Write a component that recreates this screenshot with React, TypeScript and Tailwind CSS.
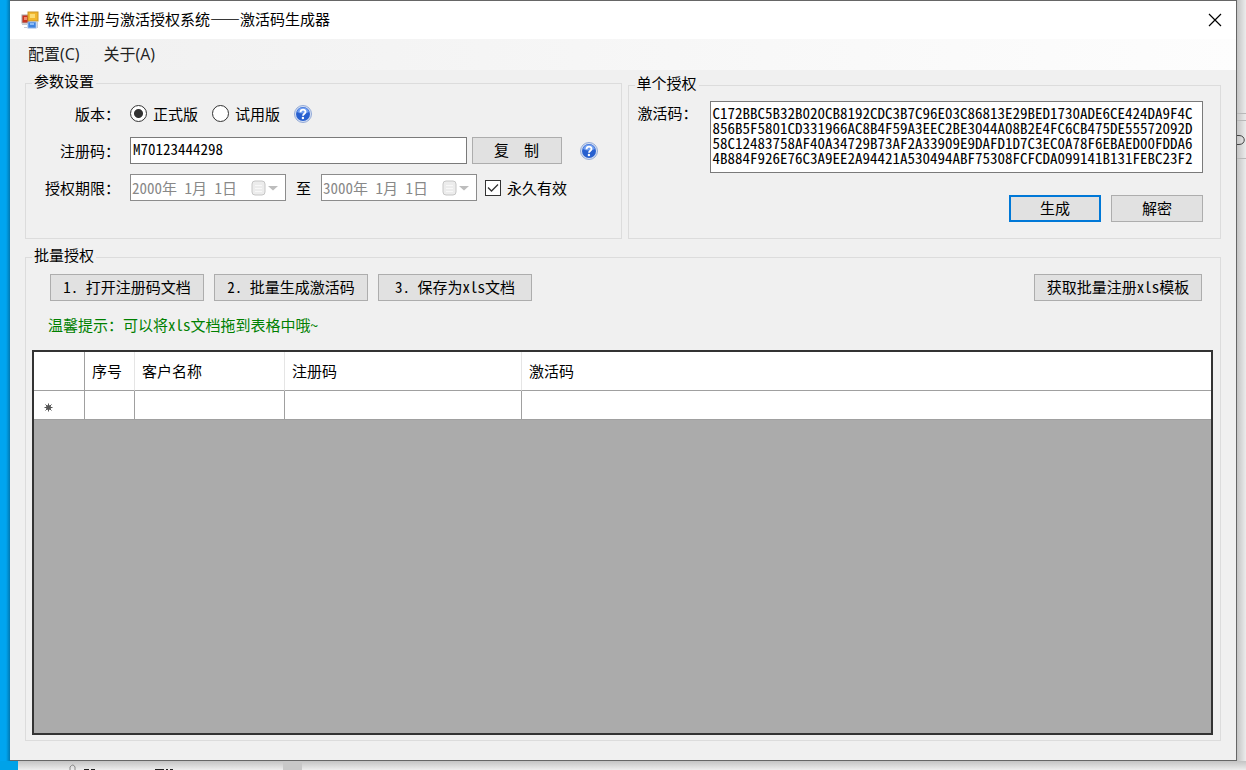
import type { ReactNode } from 'react';

const CODE = [
  'C172BBC5B32B020CB8192CDC3B7C96E03C86813E29BED1730ADE6CE424DA9F4C',
  '856B5F5801CD331966AC8B4F59A3EEC2BE3044A08B2E4FC6CB475DE55572092D',
  '58C12483758AF40A34729B73AF2A33909E9DAFD1D7C3EC0A78F6EBAED00FDDA6',
  '4B884F926E76C3A9EE2A94421A530494ABF75308FCFCDA099141B131FEBC23F2',
].join('\n');

function AppIcon() {
  return (
    <svg width="18" height="18" viewBox="0 0 18 18" aria-hidden="true">
      <rect x="1" y="4" width="7" height="8" fill="#c9321f" stroke="#a9a0a0" />
      <rect x="3" y="6" width="3" height="3" fill="#f08a6c" />
      <rect x="7" y="1" width="10" height="9" fill="#f2b72c" stroke="#c99526" />
      <rect x="9" y="3" width="5" height="4" fill="#fbdc72" />
      <rect x="7" y="11" width="8" height="6" fill="#3f84e0" stroke="#8fb2e4" />
      <rect x="9" y="12" width="4" height="2" fill="#8cbcf6" />
      <path d="M1 13.500h5M3 16.500h3M16.500 11v6" stroke="#c5c9d2" />
    </svg>
  );
}

function HelpIcon() {
  return (
    <svg className="shrink-0" width="18" height="18" viewBox="0 0 18 18" role="img" aria-label="帮助">
      <circle cx="9" cy="9" r="8.500" fill="#d5dff2" stroke="#94abd8" />
      <circle cx="9" cy="9" r="7" fill="#2860cf" />
      <path d="M3 7a6.300 6.300 0 0 1 12 0q-6 3-12 0z" fill="#6f9df0" />
      <path
        d="M6.500 7.200C6.600 3.800 11.700 4 11.500 7c-.1 1.700-2.400 1.900-2.500 3.800"
        fill="none"
        stroke="#fff"
        strokeWidth="1.800"
      />
      <circle cx="8.900" cy="13" r="1.200" fill="#fff" />
    </svg>
  );
}

function Group({ title, className, children }: { title: string; className: string; children: ReactNode }) {
  return (
    <fieldset className={`min-w-0 border border-[#dcdcdc] ${className}`}>
      <legend className="ml-1.5 px-0.5 pb-1 leading-4">{title}</legend>
      {children}
    </fieldset>
  );
}

function Button({ className, children }: { className: string; children: ReactNode }) {
  return (
    <button
      type="button"
      className={`h-[27px] shrink-0 whitespace-pre bg-[#e1e1e1] pb-0.5 text-center leading-4 hover:bg-[#e5f1fb] ${className}`}
    >
      {children}
    </button>
  );
}

function DateBox({ id, label, value }: { id: string; label: string; value: string }) {
  return (
    <div className="flex h-[27px] w-[156px] shrink-0 items-center border border-[#8c8c8c] bg-white pr-1.5">
      <input
        id={id}
        aria-label={label}
        className="h-full w-[120px] bg-transparent px-px leading-4 text-[#888]"
        defaultValue={value}
        disabled
      />
      <svg width="28" height="16" viewBox="0 0 28 16" aria-hidden="true">
        <rect x="1" y="1" width="13" height="14" rx="3" fill="#ececec" stroke="#c6c6c6" />
        <path d="M4 5.500h7M4 8.500h7M4 11.500h7" stroke="#f8f8f8" />
        <path d="M17 6h10l-5 4.500z" fill="#bdbdbd" />
      </svg>
    </div>
  );
}

const ROW = 'flex h-[27px] items-center';
const LABEL = 'mr-2.5 w-[94px] shrink-0 text-right';
const RADIO =
  'size-[17px] appearance-none rounded-full border border-[#333] bg-white checked:bg-[radial-gradient(circle,#333_0_4px,#fff_5px)]';
const GRAY_BORDER = 'border border-[#adadad]';

function Settings() {
  return (
    <Group title="参数设置" className="pb-[37px]">
      <div className="flex flex-col gap-2.5 pt-[7px]">
        <div className={ROW} role="radiogroup" aria-labelledby="version">
          <span id="version" className={LABEL}>版本：</span>
          <label className="mr-3.5 flex items-center gap-1.5">
            <input type="radio" name="version" defaultChecked className={RADIO} />
            正式版
          </label>
          <label className="mr-3.5 flex items-center gap-1.5">
            <input type="radio" name="version" className={RADIO} />
            试用版
          </label>
          <HelpIcon />
        </div>
        <div className={ROW}>
          <label htmlFor="regcode" className={LABEL}>注册码：</label>
          <input
            id="regcode"
            className="mr-[5px] h-[27px] min-w-0 flex-1 border border-[#7a7a7a] bg-white px-0.5 pb-1 leading-4"
            defaultValue="M70123444298"
          />
          <Button className={`w-[90px] ${GRAY_BORDER}`}>{'复  制'}</Button>
          <span className="ml-[18px] mr-[23px]">
            <HelpIcon />
          </span>
        </div>
        <div className={ROW}>
          <label htmlFor="from" className={LABEL}>授权期限：</label>
          <DateBox id="from" label="开始日期" value="2000年 1月 1日" />
          <span className="mx-2.5">至</span>
          <DateBox id="to" label="结束日期" value="3000年 1月 1日" />
          <label className="ml-2 flex shrink-0 items-center">
            <span className="grid">
              <input
                type="checkbox"
                defaultChecked
                className="peer col-start-1 row-start-1 size-4 appearance-none border border-[#333] bg-white"
              />
              <svg
                className="pointer-events-none invisible col-start-1 row-start-1 peer-checked:visible"
                width="16"
                height="16"
                viewBox="0 0 16 16"
                aria-hidden="true"
              >
                <path d="M3 7.500l3.500 3.500L13 4.500" fill="none" stroke="#333" strokeWidth="1.300" />
              </svg>
            </span>
            <span className="ml-1.5">永久有效</span>
          </label>
        </div>
      </div>
    </Group>
  );
}

function SingleLicense() {
  return (
    <Group title="单个授权" className="mt-0.5">
      <div className="flex items-start gap-3 pl-[9px] pr-[17px] pt-1.5">
        <label htmlFor="code" className="mt-1 shrink-0 leading-4">激活码：</label>
        <textarea
          id="code"
          spellCheck={false}
          className="h-[72px] min-w-0 flex-1 resize-none overflow-hidden border border-[#7a7a7a] bg-white px-0.5 pt-[3px] leading-[15px]"
          defaultValue={CODE}
        />
      </div>
      <div className="mt-[22px] flex justify-end gap-2.5 pr-[17px]">
        <Button className="w-[92px] border-2 border-[#0078d7]">生成</Button>
        <Button className={`w-[92px] ${GRAY_BORDER}`}>解密</Button>
      </div>
    </Group>
  );
}

function BatchLicense() {
  return (
    <Group title="批量授权" className="mt-2 flex flex-1 flex-col">
      <div className="flex gap-[10px] pl-6 pr-[18px] pt-[7px]">
        <Button className={`w-[154px] ${GRAY_BORDER}`}>1. 打开注册码文档</Button>
        <Button className={`w-[154px] ${GRAY_BORDER}`}>2. 批量生成激活码</Button>
        <Button className={`w-[154px] ${GRAY_BORDER}`}>3. 保存为xls文档</Button>
        <Button className={`ml-auto w-[168px] ${GRAY_BORDER}`}>获取批量注册xls模板</Button>
      </div>
      <p className="mt-4 pl-[22px] leading-4 text-[#008000]">温馨提示：可以将xls文档拖到表格中哦~</p>
      <div className="mb-[5px] ml-1.5 mr-[7px] mt-[17px] flex-1 border-2 border-[#333] bg-[#ababab]">
        <table className="w-full table-fixed border-separate border-spacing-0 bg-white text-left">
          <colgroup>
            <col className="w-[51px]" />
            <col className="w-[50px]" />
            <col className="w-[150px]" />
            <col className="w-[237px]" />
            <col />
          </colgroup>
          <thead>
            <tr className="h-[39px]">
              <th className="border-b border-r border-b-[#a0a0a0] border-r-[#a0a0a0]" aria-label="行" />
              <th className="border-b border-r border-b-[#a0a0a0] border-r-[#e5e5e5] pl-[7px] font-normal">序号</th>
              <th className="border-b border-r border-b-[#a0a0a0] border-r-[#e5e5e5] pl-[7px] font-normal">客户名称</th>
              <th className="border-b border-r border-b-[#a0a0a0] border-r-[#e5e5e5] pl-[7px] font-normal">注册码</th>
              <th className="border-b border-[#a0a0a0] pl-[7px] font-normal">激活码</th>
            </tr>
          </thead>
          <tbody>
            <tr className="h-[29px]">
              <td className="border-b border-r border-[#a0a0a0] pl-2.5">
                <svg className="mt-1" width="9" height="9" viewBox="0 0 9 9" role="img" aria-label="新行">
                  <circle cx="4.500" cy="4.500" r="2.500" fill="#555" />
                  <path d="M4.500 .5v8M.5 4.500h8M1.500 1.500l6 6M7.500 1.500l-6 6" stroke="#555" />
                </svg>
              </td>
              <td className="border-b border-r border-[#a0a0a0]" />
              <td className="border-b border-r border-[#a0a0a0]" />
              <td className="border-b border-r border-[#a0a0a0]" />
              <td className="border-b border-[#a0a0a0]" />
            </tr>
          </tbody>
        </table>
      </div>
    </Group>
  );
}

export default function App() {
  return (
    <div className="flex min-h-screen flex-col bg-[#dedede] font-['Noto_Sans_CJK_SC',sans-serif] text-[15px] leading-5 text-black">
      <div className="flex flex-1">
        <div className="w-2.5 shrink-0 bg-linear-to-r from-[#00a5f0] from-60% to-[#0079b3]" />
        <main className="flex min-w-0 flex-1 flex-col border-b border-r border-t border-[#666] bg-[#f0f0f0]">
          <header className="flex h-[38px] shrink-0 items-center bg-white pl-[11px] pr-3.5">
            <AppIcon />
            <h1 className="ml-1.5 pb-0.5 [font-feature-settings:'fwid']">软件注册与激活授权系统——激活码生成器</h1>
            <button type="button" aria-label="关闭" className="ml-auto">
              <svg width="14" height="14" viewBox="0 0 14 14" aria-hidden="true">
                <path d="M1 1l12 12M13 1L1 13" stroke="#000" strokeWidth="1.200" />
              </svg>
            </button>
          </header>
          <nav className="flex h-[31px] shrink-0 items-center gap-6 bg-linear-to-r from-[#f0f0f0] to-[#fdfdfd] pb-0.5 pl-[18px] font-['Open_Sans','Noto_Sans_CJK_SC',sans-serif] text-[16px] text-[#222]">
            <button type="button">配置(C)</button>
            <button type="button">关于(A)</button>
          </nav>
          <div className="flex flex-1 flex-col pb-[19px] pl-[15px] pr-[15px] pt-[3px] [font-feature-settings:'hwid']">
            <div className="grid grid-cols-[596fr_593fr] gap-1.5">
              <Settings />
              <SingleLicense />
            </div>
            <BatchLicense />
          </div>
        </main>
        <div className="w-[9px] shrink-0 bg-linear-to-r from-[#c4c4c4] to-[#ececec] pt-[113px]">
          <svg width="9" height="46" viewBox="0 0 9 46" aria-hidden="true">
            <path d="M0 .5h9M0 7.500h9M0 45.500h9" stroke="#b8b8b8" />
            <path d="M0 22.500h2c7 0 7 9 0 9H0" fill="none" stroke="#444" />
          </svg>
        </div>
      </div>
      <div className="flex h-[9px] shrink-0">
        <div className="w-[18px] shrink-0 bg-[#00a2e8]" />
        <div className="flex-1 bg-linear-to-b from-[#c4c4c4] to-[#ededed]">
          <svg width="290" height="9" viewBox="0 0 290 9" aria-hidden="true">
            <path d="M52 9V6q3-4 5 0v3" fill="none" stroke="#888" />
            <path d="M66 8.500h5M73 8.500h4M137 8.500h9M148 8.500h2M152 8.500h3" stroke="#222" />
            <rect x="265" width="19" height="9" fill="#c8c8c8" />
          </svg>
        </div>
      </div>
    </div>
  );
}
